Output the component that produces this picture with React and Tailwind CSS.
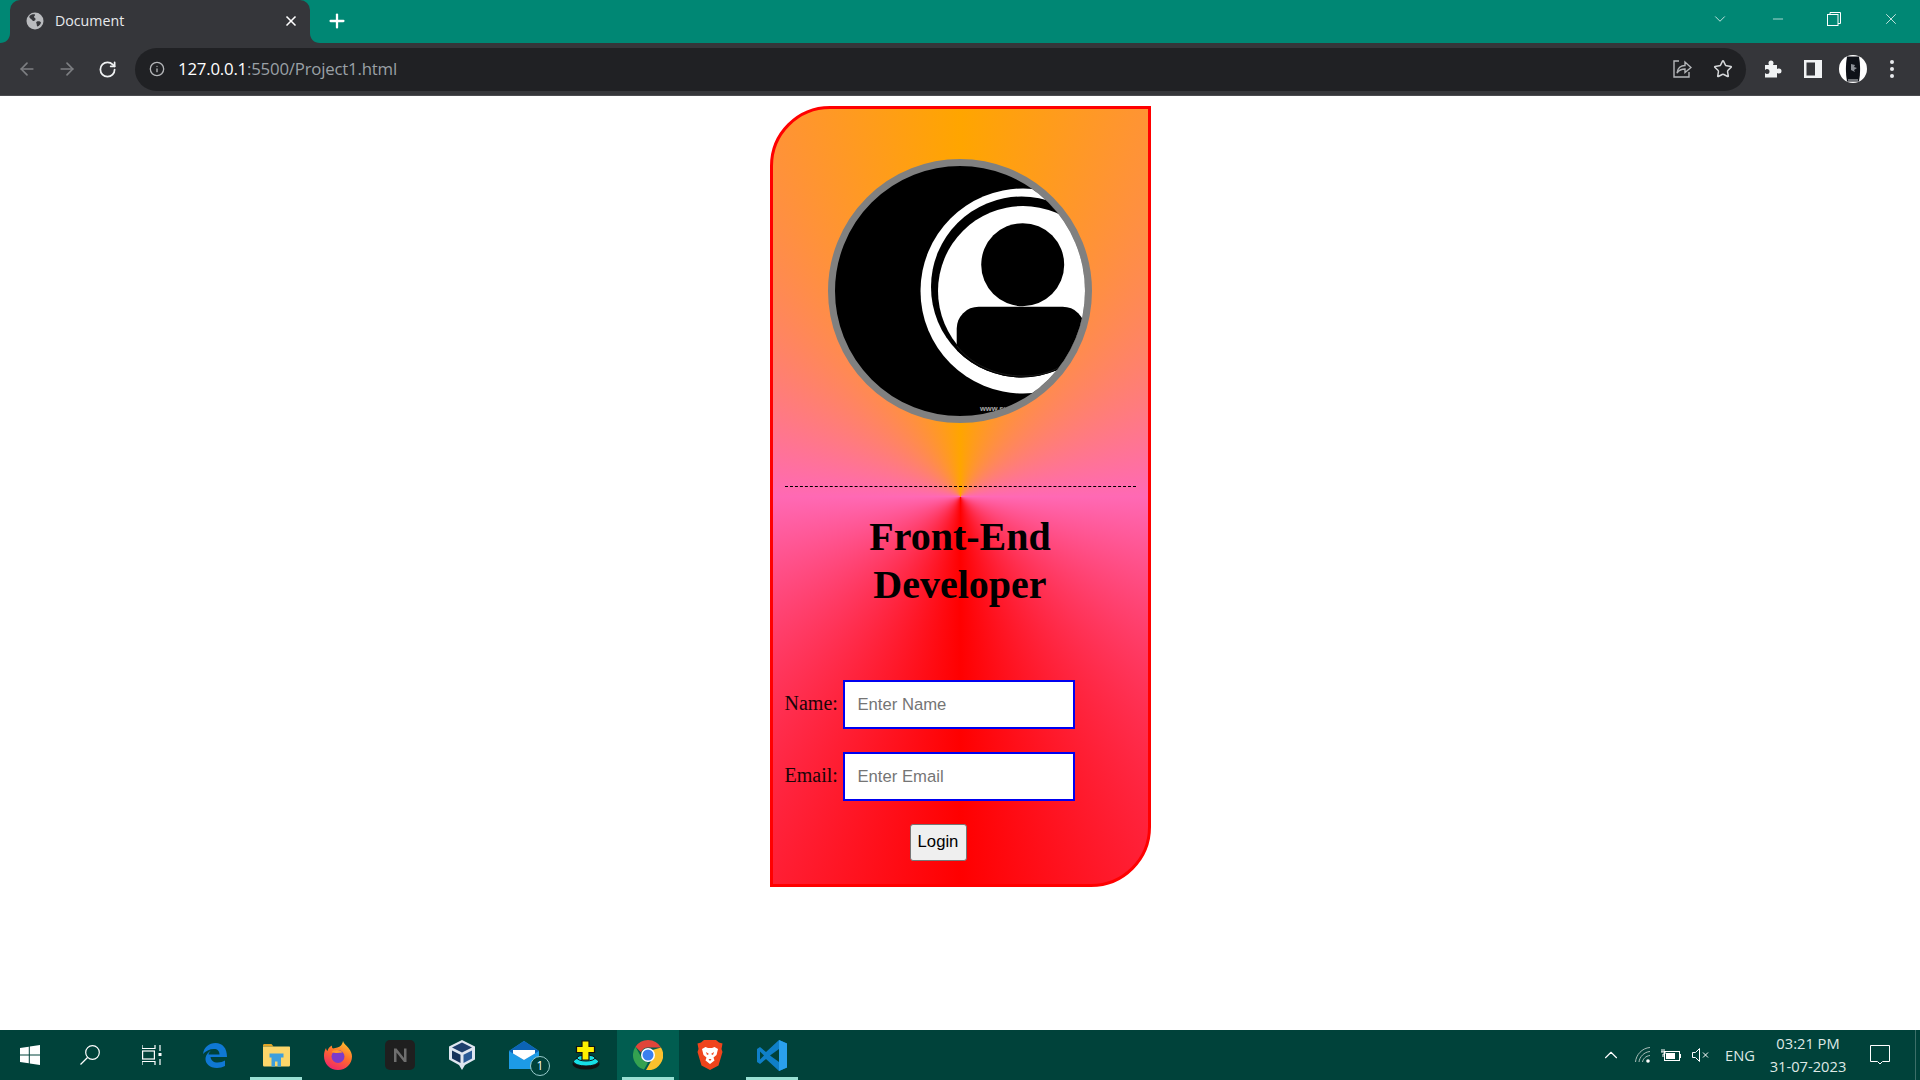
import { ArrowLeft, ArrowRight, RotateCw, Info, Star, Plus, X, Minus, ChevronDown, ChevronUp } from 'lucide-react';

function GlobeIcon() {
  return (
    <svg width="18" height="18" viewBox="0 0 18 18">
      <circle cx="9" cy="9" r="8.5" fill="#b9bbbe" />
      <path d="M4 3.5c2-1.5 4-1.5 5-1 .5 1-1 1.500-1 2.500s2 1 1.500 2.500-2.500 2-3 1-2.500-2-3-3 .2-1.800.500-2zM11 9.500c1.500-.5 3.500 0 4 1-.5 2-2 3.500-3.500 4-1-.5-.500-2-1-3s-.5-1.500.5-2z" fill="#35363a" />
    </svg>
  );
}

function ShareIcon() {
  return (
    <svg width="20" height="20" viewBox="0 0 20 20" fill="none" stroke="#b4b6b9" strokeWidth="1.4">
      <path d="M7 2H2v16h15v-5" />
      <path d="M5 14c.5-5 4-7.500 8-7.500V3l6 5.500-6 5V10c-3.500 0-6 1-8 4z" />
    </svg>
  );
}

function PuzzleIcon() {
  return (
    <svg width="20" height="20" viewBox="0 0 20 20" fill="#f1f3f4">
      <path d="M2 6h4c-.5-1-.5-1.500-.5-2a2.500 2.500 0 0 1 5 0c0 .5 0 1-.5 2h4v4c1-.5 1.500-.5 2-.5a2.500 2.500 0 0 1 0 5c-.5 0-1 0-2-.5v4.500H2v-4.500c1 .8 1.500 1 2 1a2.500 2.500 0 0 0 0-5c-.5 0-1 .2-2 1z" />
    </svg>
  );
}

function SidePanelIcon() {
  return (
    <svg width="18" height="18" viewBox="0 0 18 18">
      <rect width="18" height="18" fill="#f1f3f4" />
      <rect x="2.500" y="2.500" width="8.500" height="13" fill="#35363a" />
    </svg>
  );
}

function ProfileIcon() {
  return (
    <svg width="28" height="28" viewBox="0 0 28 28">
      <circle cx="14" cy="14" r="14" fill="#fff" />
      <path d="M8 1.500h12c1.500 8 1.500 17 0 25H8c-1.500-8-1.500-17 0-25z" fill="#0e1118" />
      <path d="M12 9l4 1-1 2 3 1-3 2 1 2-4-2z" fill="#8b8f96" />
      <path d="M9 24h10v2H9z" fill="#6d7075" />
    </svg>
  );
}

function DotsIcon() {
  return (
    <svg width="6" height="20" viewBox="0 0 6 20" fill="#e8eaed">
      <circle cx="3" cy="3" r="2" />
      <circle cx="3" cy="10" r="2" />
      <circle cx="3" cy="17" r="2" />
    </svg>
  );
}

function RestoreIcon() {
  return (
    <svg width="14" height="14" viewBox="0 0 14 14" fill="none" stroke="#fff" strokeWidth="1">
      <rect x="0.500" y="2.500" width="10.500" height="11" />
      <path d="M3 2.500V.5h10.500v11H11" />
    </svg>
  );
}

function Avatar() {
  return (
    <div className="w-[264px] h-[264px] mx-auto rounded-full border-[7px] border-[#808080] bg-black overflow-hidden">
      <svg width="250" height="250" viewBox="0 0 250 250" className="block">
        <defs>
          <clipPath id="ringClip">
            <circle cx="186.500" cy="121" r="90.500" />
          </clipPath>
        </defs>
        <circle cx="188" cy="125" r="102.500" fill="#fff" />
        <circle cx="186.500" cy="121" r="90.500" fill="#000" />
        <circle cx="188" cy="125" r="85" fill="#fff" />
        <circle cx="187.700" cy="98.700" r="41.500" fill="#000" />
        <g clipPath="url(#ringClip)">
          <rect x="121.700" y="140.700" width="128" height="100" rx="22" fill="#000" />
        </g>
        <path d="M122 180c14 18 38 30 66 30 14 0 26-3 37-9" fill="none" stroke="#222" strokeWidth="0.800" />
        <text x="145" y="245" fontSize="7.500" fontWeight="700" fill="#a8a8a8" fontFamily="Liberation Sans, sans-serif">www.sus</text>
      </svg>
    </div>
  );
}

function FormRow({ label, placeholder }) {
  return (
    <div className="flex items-center">
      <label className="w-[58px] text-[20px] text-[#1a0508] leading-none -mt-[3px]">{label}</label>
      <input
        placeholder={placeholder}
        className="w-[232px] h-[49px] bg-white border-2 border-[#0000f0] pl-[13px] text-[16.67px] placeholder:text-[#757575] outline-none font-['Liberation_Sans',sans-serif]"
      />
    </div>
  );
}

function WindowsIcon() {
  return (
    <svg width="20" height="20" viewBox="0 0 20 20" fill="#fff">
      <path d="M0 3l8.800-1.300v7.800H0zM9.800 1.500L20 0v9.500H9.800zM0 10.500h8.800v7.800L0 17zM9.800 10.500H20V20L9.800 18.500z" />
    </svg>
  );
}

function SearchIcon() {
  return (
    <svg width="20" height="20" viewBox="0 0 20 20" fill="none" stroke="#fff" strokeWidth="1.200">
      <circle cx="12.500" cy="7.500" r="6.800" />
      <path d="M7.500 12.500L.5 19.500" />
    </svg>
  );
}

function TaskViewIcon() {
  return (
    <svg width="20" height="20" viewBox="0 0 20 20" fill="none" stroke="#fff" strokeWidth="1.200">
      <path d="M0 0v3.500h13V0M0 20v-3.500h13V20" />
      <rect x="0.600" y="6" width="11.800" height="8" />
      <path d="M18 0v6M18 14v6" />
      <rect x="16.500" y="8" width="3" height="3" fill="#fff" stroke="none" />
    </svg>
  );
}

function EdgeIcon() {
  return (
    <svg width="25" height="25" viewBox="0 0 25 25">
      <path d="M1 11C2 4 7 0 13.500 0 20.500 0 25 5 25 14H8.500c.5 3.500 3 5.500 7 5.500 3 0 5.500-.8 7.500-2v5.500c-2.500 1.300-5 2-8 2C7.500 25 3 20.500 3.500 15 4 12 6 9 9 7.500 7.500 9 6.800 10 6.500 11.500h11c0-3.500-2-5.500-5.500-5.500-4.500 0-8.500 2-11 5z" fill="#0f78d4" />
    </svg>
  );
}

function ExplorerIcon() {
  return (
    <svg width="27" height="23" viewBox="0 0 27 23">
      <path d="M0 1.500C0 .5.500 0 1.500 0h7l2 2.500H0z" fill="#e0a526" />
      <path d="M0 2.500h26c.6 0 1 .4 1 1V21c0 1-.6 1.500-1.500 1.500h-24C.6 22.500 0 22 0 21z" fill="#fcd66a" />
      <path d="M6.500 9.500h14v4h-2.500v9h-3.500v-5h-2.500v5H8.500v-9h-2z" fill="#3f9fdc" />
    </svg>
  );
}

function FirefoxIcon() {
  return (
    <svg width="28" height="29" viewBox="0 0 28 29">
      <defs>
        <linearGradient id="fxGrad" x1="0.800" y1="0" x2="0.300" y2="1">
          <stop offset="0" stopColor="#ffc62e" />
          <stop offset="0.500" stopColor="#ff6b2c" />
          <stop offset="1" stopColor="#f0246c" />
        </linearGradient>
      </defs>
      <path d="M19 0c1 3 3 4 5.500 7 2.500 3 3.500 6 3.500 8.500C28 23 22 29 14 29S0 23 0 15c0-3 .7-6 2-8 .2 1.500.8 2.500 1.500 3C4 7.500 5.500 5.500 8 4.500c-.3 1.500.2 2.500 1 3 3-.5 6-1 8-3 1-1.300 1.800-3 2-4.500z" fill="url(#fxGrad)" />
      <circle cx="14" cy="15.500" r="6.500" fill="#7c3bc9" />
      <path d="M7.500 11c3 1.500 8 1 11 .5-1-1.500-3-2.500-5.500-2.500-2.500 0-4.500.8-5.500 2z" fill="#ff9a2b" />
    </svg>
  );
}

function NotionIcon() {
  return (
    <svg width="30" height="30" viewBox="0 0 30 30">
      <rect width="30" height="30" rx="5" fill="#1f1f1f" />
      <path d="M9 22V8.500h2.500L19 18V8.500h2.500V22H19l-7.500-9.500V22z" fill="#6e6e6e" />
    </svg>
  );
}

function VBoxIcon() {
  return (
    <svg width="26" height="30" viewBox="0 0 26 30">
      <path d="M13 0l13 6.500v13L16 25l-3 5-3-5L0 19.500v-13z" fill="#dfe6f0" />
      <path d="M13 2.500L23 7.500 13 12.500 3 7.500z" fill="#1e3f6d" />
      <path d="M3 10.500l8.500 4.300V23L3 18.500z" fill="#16325a" />
      <path d="M23 10.500l-8.500 4.300V23L23 18.500z" fill="#2a5a96" />
    </svg>
  );
}

function MailIcon() {
  return (
    <div className="relative w-[30px] h-[28px]">
      <svg width="30" height="28" viewBox="0 0 30 28" className="block">
        <path d="M0 10L15 0l15 10v18H0z" fill="#1d9be6" />
        <path d="M0 10L15 0l15 10-15 9z" fill="#0c63b5" />
        <path d="M4 9h22v3.500L15 19 4 12.500z" fill="#fff" />
      </svg>
      <span className="absolute -right-[11px] -bottom-[7px] w-[20px] h-[20px] rounded-full border border-[#9cc] bg-[#00423a] text-white text-[12px] leading-[18px] text-center">1</span>
    </div>
  );
}

function PlusStackIcon() {
  return (
    <svg width="28" height="30" viewBox="0 0 28 30">
      <ellipse cx="14" cy="24" rx="13.500" ry="5.500" fill="#111" />
      <ellipse cx="14" cy="21.500" rx="12.500" ry="4.500" fill="#16dfe6" stroke="#111" strokeWidth="1" />
      <ellipse cx="14" cy="18" rx="9" ry="3" fill="#16dfe6" stroke="#111" strokeWidth="1" />
      <path d="M10 1h7v5.500h5.500v6H17V20h-7v-7.500H4.500v-6H10z" fill="#ffee00" stroke="#111" strokeWidth="1.200" />
    </svg>
  );
}

function ChromeIcon() {
  return (
    <svg width="30" height="30" viewBox="0 0 30 30">
      <path d="M15 0a15 15 0 0 1 13 7.500H15a7.500 7.500 0 0 0-7 4.800L2.500 6.800A15 15 0 0 1 15 0z" fill="#e0453a" />
      <path d="M2.500 6.800L9 18.500a7.500 7.500 0 0 0 6 4l-4 7.100A15 15 0 0 1 2.500 6.800z" fill="#34a150" />
      <path d="M28 7.500A15 15 0 0 1 13 30l6-10.500a7.500 7.500 0 0 0 .5-9.500z" fill="#fbc02d" />
      <circle cx="15" cy="15" r="7" fill="#fff" />
      <circle cx="15" cy="15" r="5.500" fill="#3b7ff0" />
    </svg>
  );
}

function BraveIcon() {
  return (
    <svg width="26" height="30" viewBox="0 0 26 30">
      <path d="M7 0h12l3 2.500 3.500 1-1 5.500 1 3-4 13.500L13 30l-8.500-4.500L.5 12l1-3-1-5.500L4 2.500z" fill="#f0441c" />
      <path d="M5 9l3.500-2 2.500 1h4l2.500-1L21 9l-1.500 6-3 2.500 1 3-4.500 3.500L8.500 20.500l1-3-3-2.500z" fill="#fff" />
      <path d="M9 12l3 2-2 1zM17 12l-3 2 2 1zM11.500 19h3L13 21z" fill="#f0441c" />
    </svg>
  );
}

function VSCodeIcon() {
  return (
    <svg width="30" height="31" viewBox="0 0 30 31">
      <path d="M22 0l8 3.500v24L22 31 9 19 3 24 0 22v-13l3-2 6 5z" fill="#0f7fc8" />
      <path d="M22 0l8 3.500v24L22 31z" fill="#2aa0ec" />
      <path d="M22 9l-9 6.500 9 6.500z" fill="#00423a" />
      <path d="M3 11.500l4 4-4 4z" fill="#00423a" />
    </svg>
  );
}

function WifiIcon() {
  return (
    <svg width="16" height="16" viewBox="0 0 16 16" fill="none" stroke="#a7bdb8" strokeWidth="1">
      <path d="M.5 15C1 8 7 1 15 .5" />
      <path d="M4 15c.5-5 5-10 11-10.500" />
      <path d="M7.500 15c.5-3 3-6 7.500-6.500" />
      <circle cx="13" cy="14" r="1.800" fill="#fff" stroke="none" />
    </svg>
  );
}

function BatteryIcon() {
  return (
    <svg width="20" height="14" viewBox="0 0 20 14" fill="none" stroke="#fff" strokeWidth="1">
      <rect x="3.500" y="3.500" width="15" height="9" />
      <rect x="5" y="5" width="9" height="6" fill="#fff" stroke="none" />
      <rect x="18.500" y="6" width="1.500" height="4" fill="#fff" stroke="none" />
      <path d="M1 1v3M3 1v3M0 4h4v2H2v3" />
    </svg>
  );
}

function MuteIcon() {
  return (
    <svg width="18" height="14" viewBox="0 0 18 14" fill="none" stroke="#fff" strokeWidth="1">
      <path d="M.5 4.500h3L7.500.5v13l-4-4h-3z" />
      <path d="M11 4.500l5 5M16 4.500l-5 5" />
    </svg>
  );
}

function NotifyIcon() {
  return (
    <svg width="20" height="20" viewBox="0 0 20 20" fill="none" stroke="#fff" strokeWidth="1">
      <path d="M.5.5h19v16h-7l-2.500 2.500-2.500-2.500h-7z" />
    </svg>
  );
}

const taskItems = [
  { icon: <EdgeIcon /> },
  { icon: <ExplorerIcon />, open: true },
  { icon: <FirefoxIcon /> },
  { icon: <NotionIcon /> },
  { icon: <VBoxIcon /> },
  { icon: <MailIcon /> },
  { icon: <PlusStackIcon /> },
  { icon: <ChromeIcon />, open: true, active: true },
  { icon: <BraveIcon /> },
  { icon: <VSCodeIcon />, open: true },
];

export default function App() {
  return (
    <div className="h-screen flex flex-col bg-white overflow-hidden font-['Liberation_Serif',serif]">
      {/* Tab strip */}
      <div className="h-[43px] bg-[#008774] flex items-end pl-[10px] font-['Open_Sans',sans-serif]">
        <div className="relative w-[300px] h-[43px] bg-[#35363a] rounded-t-[10px] flex items-center pl-[16px] pr-[11px] pb-[2px]">
          <svg width="10" height="10" viewBox="0 0 10 10" className="absolute -left-[10px] bottom-0">
            <path d="M10 0v10H0C6 10 10 6 10 0z" fill="#35363a" />
          </svg>
          <svg width="10" height="10" viewBox="0 0 10 10" className="absolute -right-[10px] bottom-0">
            <path d="M0 0v10H10C4 10 0 6 0 0z" fill="#35363a" />
          </svg>
          <GlobeIcon />
          <span className="ml-[11px] text-[14.200px] text-[#e8eaed] flex-1">Document</span>
          <X size={16} strokeWidth={2.5} className="text-white" />
        </div>
        <Plus size={22} strokeWidth={2.5} className="text-white ml-[16px] mb-[11px]" />
        <div className="ml-auto flex items-center h-[38px] self-start text-white">
          <ChevronDown size={18} strokeWidth={1} className="mr-[41px]" />
          <Minus size={16} strokeWidth={1} className="mr-[41px]" />
          <RestoreIcon />
          <X size={18} strokeWidth={1} className="ml-[41px] mr-[20px]" />
        </div>
      </div>

      {/* Toolbar */}
      <div className="h-[53px] bg-[#35363a] border-b border-[#4a4b4f] flex items-center font-['Open_Sans',sans-serif]">
        <ArrowLeft size={20} strokeWidth={2} className="ml-[17px] text-[#7d7f82]" />
        <ArrowRight size={20} strokeWidth={2} className="ml-[20px] text-[#7d7f82]" />
        <RotateCw size={19} strokeWidth={2.2} className="ml-[21px] text-[#f1f3f4]" />
        <div className="ml-[18px] w-[1611px] h-[43px] rounded-full bg-[#202124] flex items-center pl-[14px] pr-[13px]">
          <Info size={16} strokeWidth={2} className="text-[#b4b6b9]" />
          <span className="ml-[13px] text-[16.800px] tracking-[-0.2px] text-white">
            127.0.0.1<span className="text-[#9aa0a6]">:5500/Project1.html</span>
          </span>
          <div className="ml-auto flex items-center gap-[21px]">
            <ShareIcon />
            <Star size={20} strokeWidth={1.8} className="text-[#d5d7d9]" />
          </div>
        </div>
        <div className="ml-[17px] flex items-center">
          <PuzzleIcon />
          <div className="ml-[21px]"><SidePanelIcon /></div>
          <div className="ml-[17px]"><ProfileIcon /></div>
          <div className="ml-[22px]"><DotsIcon /></div>
        </div>
      </div>

      {/* Page */}
      <main className="flex-1 pt-[10px]">
        <div className="w-[381px] h-[781px] mx-auto border-[3px] border-[#ff0000] rounded-tl-[60px] rounded-br-[60px] bg-[conic-gradient(orange,hotpink,red,hotpink,orange)] px-[12px] pt-[50px]">
          <Avatar />
          <hr className="mt-[63px] border-0 border-t border-dashed border-black" />
          <h1 className="mt-[26px] text-[40px] leading-[48px] font-bold text-center text-black">
            Front-End
            <br />
            Developer
          </h1>
          <div className="mt-[71px] flex flex-col gap-[23px]">
            <FormRow label="Name:" placeholder="Enter Name" />
            <FormRow label="Email:" placeholder="Enter Email" />
          </div>
          <button className="mt-[23px] ml-[125px] w-[57px] h-[37px] pb-[2px] bg-[#efefef] border border-[#767676] rounded-[3px] text-[16.67px] text-black font-['Liberation_Sans',sans-serif]">
            Login
          </button>
        </div>
      </main>

      {/* Windows taskbar */}
      <footer className="h-[50px] bg-[#00423a] flex items-stretch font-['Open_Sans',sans-serif] text-white">
        <div className="w-[60px] flex items-center justify-center"><WindowsIcon /></div>
        <div className="w-[60px] flex items-center justify-center"><SearchIcon /></div>
        <div className="w-[63px] flex items-center justify-center"><TaskViewIcon /></div>
        {taskItems.map((item, i) => (
          <div
            key={i}
            className={`w-[62px] flex items-center justify-center relative ${item.active ? 'bg-[#015d50]' : ''}`}
          >
            {item.icon}
            {item.open && <div className="absolute bottom-0 left-[5px] right-[5px] h-[3px] bg-[#99e0d3]" />}
          </div>
        ))}
        <div className="ml-auto flex items-center">
          <ChevronUp size={22} strokeWidth={1.2} className="text-white" />
          <div className="ml-[13px]"><WifiIcon /></div>
          <div className="ml-[10px]"><BatteryIcon /></div>
          <div className="ml-[11px]"><MuteIcon /></div>
          <span className="ml-[15px] text-[14.700px] text-[#dfe9e6]">ENG</span>
          <div className="ml-[13px] w-[80px] text-center text-[14.700px] leading-[23px] text-[#dfe9e6]">
            <div>03:21 PM</div>
            <div>31-07-2023</div>
          </div>
          <div className="ml-[22px] mr-[25px]"><NotifyIcon /></div>
          <div className="w-px h-full bg-[#3c6f68] mr-[4px]" />
        </div>
      </footer>
    </div>
  );
}
